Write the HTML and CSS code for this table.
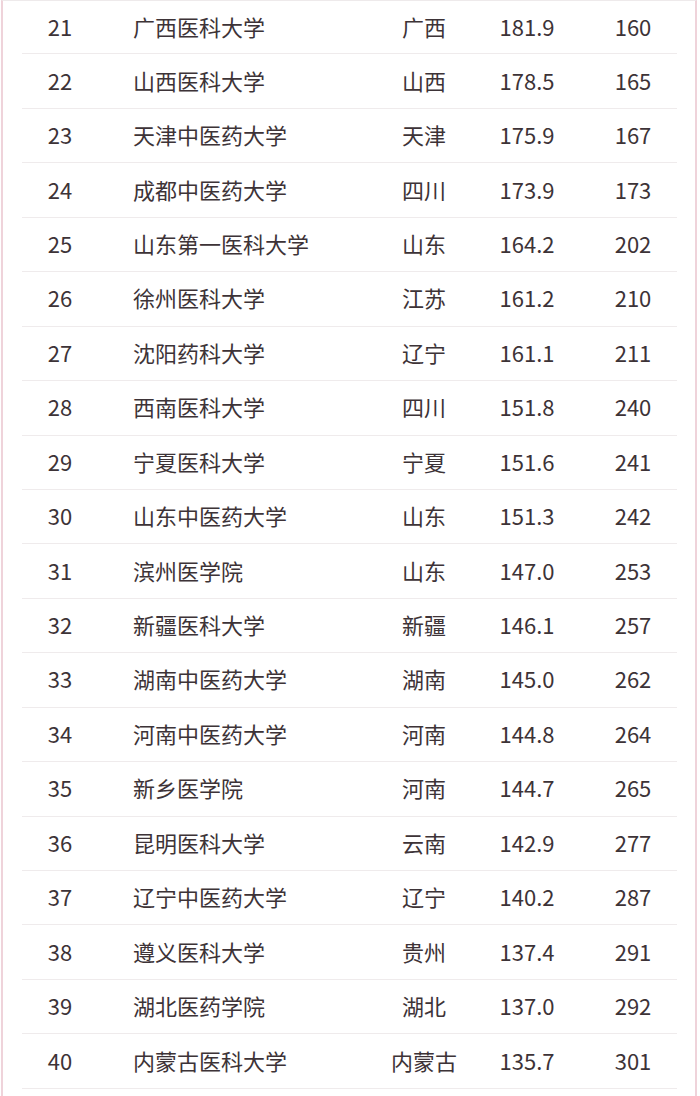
FILE: index.html
```html
<!DOCTYPE html>
<html lang="zh-CN">
<head>
<meta charset="utf-8">
<title>医科大学排名 21-40</title>
<link rel="stylesheet" href="styles.css">
</head>
<body>
<div class="sheet">
  <div class="table">
    <div class="row"><span class="rank">21</span><span class="name">广西医科大学</span><span class="prov">广西</span><span class="score">181.9</span><span class="count">160</span></div>
    <div class="row"><span class="rank">22</span><span class="name">山西医科大学</span><span class="prov">山西</span><span class="score">178.5</span><span class="count">165</span></div>
    <div class="row"><span class="rank">23</span><span class="name">天津中医药大学</span><span class="prov">天津</span><span class="score">175.9</span><span class="count">167</span></div>
    <div class="row"><span class="rank">24</span><span class="name">成都中医药大学</span><span class="prov">四川</span><span class="score">173.9</span><span class="count">173</span></div>
    <div class="row"><span class="rank">25</span><span class="name">山东第一医科大学</span><span class="prov">山东</span><span class="score">164.2</span><span class="count">202</span></div>
    <div class="row"><span class="rank">26</span><span class="name">徐州医科大学</span><span class="prov">江苏</span><span class="score">161.2</span><span class="count">210</span></div>
    <div class="row"><span class="rank">27</span><span class="name">沈阳药科大学</span><span class="prov">辽宁</span><span class="score">161.1</span><span class="count">211</span></div>
    <div class="row"><span class="rank">28</span><span class="name">西南医科大学</span><span class="prov">四川</span><span class="score">151.8</span><span class="count">240</span></div>
    <div class="row"><span class="rank">29</span><span class="name">宁夏医科大学</span><span class="prov">宁夏</span><span class="score">151.6</span><span class="count">241</span></div>
    <div class="row"><span class="rank">30</span><span class="name">山东中医药大学</span><span class="prov">山东</span><span class="score">151.3</span><span class="count">242</span></div>
    <div class="row"><span class="rank">31</span><span class="name">滨州医学院</span><span class="prov">山东</span><span class="score">147.0</span><span class="count">253</span></div>
    <div class="row"><span class="rank">32</span><span class="name">新疆医科大学</span><span class="prov">新疆</span><span class="score">146.1</span><span class="count">257</span></div>
    <div class="row"><span class="rank">33</span><span class="name">湖南中医药大学</span><span class="prov">湖南</span><span class="score">145.0</span><span class="count">262</span></div>
    <div class="row"><span class="rank">34</span><span class="name">河南中医药大学</span><span class="prov">河南</span><span class="score">144.8</span><span class="count">264</span></div>
    <div class="row"><span class="rank">35</span><span class="name">新乡医学院</span><span class="prov">河南</span><span class="score">144.7</span><span class="count">265</span></div>
    <div class="row"><span class="rank">36</span><span class="name">昆明医科大学</span><span class="prov">云南</span><span class="score">142.9</span><span class="count">277</span></div>
    <div class="row"><span class="rank">37</span><span class="name">辽宁中医药大学</span><span class="prov">辽宁</span><span class="score">140.2</span><span class="count">287</span></div>
    <div class="row"><span class="rank">38</span><span class="name">遵义医科大学</span><span class="prov">贵州</span><span class="score">137.4</span><span class="count">291</span></div>
    <div class="row"><span class="rank">39</span><span class="name">湖北医药学院</span><span class="prov">湖北</span><span class="score">137.0</span><span class="count">292</span></div>
    <div class="row"><span class="rank">40</span><span class="name">内蒙古医科大学</span><span class="prov">内蒙古</span><span class="score">135.7</span><span class="count">301</span></div>
  </div>
</div>
</body>
</html>
```

FILE: styles.css
```css
html, body {
  margin: 0;
  padding: 0;
  background: #ffffff;
}

body {
  font-family: "Noto Sans CJK SC", "Noto Sans", sans-serif;
  color: #3d3337;
  height: 1096px;
  overflow: hidden;
}

.sheet {
  margin-left: 1px;
  width: 696px;
  height: 1096px;
  border-left: 2px solid #efd3da;
  border-right: 2px solid #efd3da;
  border-top: 1px solid #eeeaeb;
  box-sizing: border-box;
}

.table {
  display: flex;
  flex-direction: column;
  margin: 0 0 0 19px;
  width: 655px;
}

.row {
  display: grid;
  grid-template-columns: 76px 276px 100px 106px 1fr;
  align-items: center;
  height: 54.45px;
  box-sizing: border-box;
  border-bottom: 1px solid #efebec;
  font-size: 22px;
  line-height: 1;
  padding-bottom: 3px;
}

.row:first-child {
  height: 53.45px;
}

.rank {
  text-align: center;
}

.name {
  padding-left: 35px;
  white-space: nowrap;
}

.prov {
  text-align: center;
}

.score {
  text-align: center;
}

.count {
  text-align: center;
  padding-left: 9px;
}
```
